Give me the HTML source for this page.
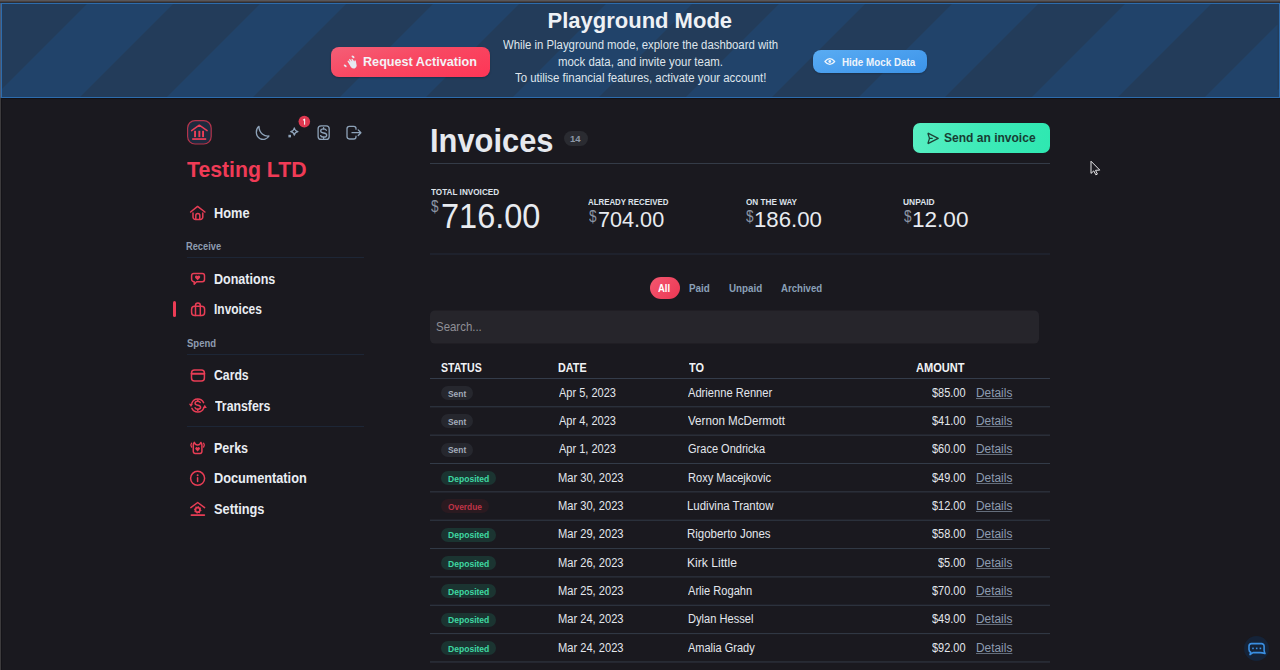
<!DOCTYPE html>
<html><head><meta charset="utf-8"><style>
html,body{margin:0;padding:0;}
body{width:1280px;height:670px;overflow:hidden;background:#1a191f;position:relative;font-family:'Liberation Sans', sans-serif;}
.t{position:absolute;white-space:nowrap;}
.a{position:absolute;}
</style></head><body>
<div class="a" style="left:0;top:0;width:1280px;height:1px;background:#56565b"></div>
<div class="a" style="left:0;top:1px;width:1280px;height:1px;background:#4a403e"></div>
<div class="a" style="left:0;top:2px;width:1280px;height:1px;background:#2a2f38"></div>
<div class="a" style="left:0;top:3px;width:1px;height:95px;background:#4b5870"></div>
<div class="a" style="left:1px;top:3px;width:1277px;height:93px;border:1px solid #2d6cad;background:repeating-linear-gradient(135deg,#233c5a 0px,#233c5a 61.1px,#21436a 61.1px,#21436a 122.3px);background-position:-1.5px 0"></div>
<div class="a" style="left:0;top:98px;width:1280px;height:1px;background:#121116"></div>
<div class="a" style="left:0;top:98px;width:1px;height:572px;background:#3d3b3d"></div>
<div class="a" style="left:1px;top:98px;width:1px;height:572px;background:#141318"></div>
<!-- Request Activation button -->
<div class="a" style="left:331px;top:47px;width:159px;height:30px;border-radius:8px;background:linear-gradient(165deg,#f45f77 0%,#f84862 45%,#fe3556 100%);box-shadow:0 1px 2px rgba(0,0,0,.25)"></div>
<!-- Hide mock data button -->
<div class="a" style="left:813px;top:50px;width:114px;height:23px;border-radius:8px;background:linear-gradient(165deg,#5aacf2 0%,#4a9fee 50%,#3b93e8 100%);box-shadow:0 1px 2px rgba(0,0,0,.2)"></div>
<!-- sidebar dividers -->
<div class="a" style="left:187px;top:257px;width:177px;height:1px;background:#1d2636"></div>
<div class="a" style="left:187px;top:354px;width:177px;height:1px;background:#1d2636"></div>
<div class="a" style="left:187px;top:426px;width:177px;height:1px;background:#1d2636"></div>
<!-- active bar -->
<div class="a" style="left:173px;top:301px;width:3px;height:16px;border-radius:2px;background:#ec3c55"></div>
<!-- main -->
<div class="a" style="left:564px;top:131px;width:24px;height:15px;border-radius:8px;background:#2a2b31"></div>
<div class="a" style="left:913px;top:123px;width:137px;height:30px;border-radius:7px;background:linear-gradient(100deg,#58efc2 0%,#3eeab8 50%,#2ee8b1 100%)"></div>
<div class="a" style="left:430px;top:163px;width:620px;height:1px;background:#343b47"></div>
<svg class="a" style="left:0;top:0" width="1280" height="670"><rect x="430" y="253.5" width="620" height="1" fill="#222b3a"/></svg>
<div class="a" style="left:650px;top:277px;width:30px;height:22px;border-radius:11px;background:linear-gradient(135deg,#f35770,#ec3753)"></div>
<svg class="a" style="left:0;top:0" width="1280" height="670"><rect x="430" y="310.4" width="609" height="33.2" rx="5" fill="#26252b"/></svg>
<div class="a" style="left:430px;top:378px;width:620px;height:1px;background:#343c4a"></div>
<div class="a" style="left:1244px;top:636px;width:25px;height:25px;border-radius:50%;background:#152338"></div>
<svg class="a" style="left:0;top:0" width="1280" height="670" viewBox="0 0 1280 670">
 <g fill="none" stroke-linecap="round" stroke-linejoin="round">
  <!-- logo -->
  <rect x="187.6" y="120.6" width="23.6" height="23.4" rx="7.5" fill="#1e2a3e" stroke="#b3344b" stroke-width="1.2"/>
  <polyline points="191.6,130.6 199.3,125.2 207.1,130.6" stroke="#ec3f57" stroke-width="1.5"/>
  <g fill="#ec3f57" stroke="none">
   <rect x="194.1" y="130.8" width="1.9" height="6.3"/>
   <rect x="198.4" y="130.8" width="1.9" height="6.3"/>
   <rect x="202.1" y="130.8" width="1.9" height="6.3"/>
   <rect x="192.2" y="138.2" width="14" height="1.7"/>
  </g>
  <!-- header icons -->
  <g stroke="#8ea3b9" stroke-width="1.3">
   <path d="M259,126.3 C255.2,129.3 255.4,136 260,138.6 C263.3,140.3 267.2,139.2 269,136 C264.5,136.6 258.8,133 259,126.3 Z"/>
   <path d="M294.3,128 Q294.8,131.1 297.9,131.6 Q294.8,132.1 294.3,135.2 Q293.8,132.1 290.7,131.6 Q293.8,131.1 294.3,128 Z"/>
   <rect x="318.1" y="125.8" width="11.1" height="13.6" rx="3"/>
   <path d="M326.3,130.3 C325.9,129.3 325,128.9 323.6,128.9 C321.7,128.9 320.7,129.8 320.7,131 C320.7,132.4 322,132.8 323.6,133 C325.4,133.2 326.7,133.8 326.7,135.2 C326.7,136.5 325.5,137.1 323.6,137.1 C322.1,137.1 321.1,136.6 320.6,135.6"/>
   <path d="M323.6,127.6 V128.9 M323.6,137.1 V138.4"/>
   <path d="M356,129.2 V128.6 A2.2,2.2 0 0 0 353.8,126.4 H349.4 A2.4,2.4 0 0 0 347,128.8 V136.6 A2.4,2.4 0 0 0 349.4,139 H353.8 A2.2,2.2 0 0 0 356,136.8 V136.2"/>
   <path d="M352,132.7 H360.8 M358.2,129.9 L360.9,132.7 L358.2,135.5"/>
  </g>
  <rect x="288.4" y="134.8" width="2.6" height="2.6" fill="#8ea3b9"/>
  <circle cx="304.3" cy="121.6" r="5.8" fill="#df3850"/>
  <path d="M303.4,119.9 L304.6,119.2 V124.3" stroke="#f4f4f4" stroke-width="1.1"/>
  <!-- nav icons -->
  <g stroke="#e83d55" stroke-width="1.5">
   <polyline points="190.6,212 197.6,206.4 204.9,212"/>
   <path d="M193,212.9 V216.9 A2.6,2.6 0 0 0 195.6,219.5 H200.2 A2.6,2.6 0 0 0 202.8,216.9 V212.9"/>
   <path d="M195.8,219.3 V215.6 A2,2 0 0 1 199.8,215.6 V219.3"/>
   <path d="M193.8,273.6 H202.3 A2.2,2.2 0 0 1 204.5,275.8 V279.6 A2.2,2.2 0 0 1 202.3,281.8 H196.6 L194.2,284.2 V281.7 A2.4,2.4 0 0 1 191.6,279.3 V275.8 A2.2,2.2 0 0 1 193.8,273.6 Z"/>
   <rect x="191.6" y="306.3" width="13" height="9.2" rx="3"/>
   <path d="M195.5,315.4 V305.4 A2.4,2.4 0 0 1 200.3,305.4 V315.4"/>
   <rect x="191.5" y="370" width="12.9" height="11" rx="3"/>
   <path d="M191.6,373.7 H204.3" stroke-width="2"/>
   <path d="M191.8,403.2 A6.5,6.5 0 0 1 203.6,402.6"/>
   <path d="M203.8,408 A6.5,6.5 0 0 1 191.9,408.4"/>
   <path d="M200.2,402.5 C199.8,401.6 199,401.3 197.8,401.3 C196,401.3 195.1,402.2 195.1,403.3 C195.1,404.6 196.3,405 197.8,405.2 C199.5,405.4 200.6,406 200.6,407.3 C200.6,408.6 199.5,409.2 197.8,409.2 C196.5,409.2 195.5,408.7 195.1,407.8"/>
   <path d="M197.8,400 V401.3 M197.8,409.2 V410.5"/>
   <path d="M194.4,442.4 Q195.2,444.9 197.6,444.9 Q200,444.9 200.8,442.4 Q201.9,443.4 201.9,445 V451.6 A1.8,1.8 0 0 1 200.1,453.4 H195.1 A1.8,1.8 0 0 1 193.3,451.6 V445 Q193.3,443.4 194.4,442.4 Z"/>
   <path d="M191.6,443.2 Q190.1,445.1 191.6,447 M203.6,443.2 Q205.1,445.1 203.6,447" stroke-width="1.3"/>
   <circle cx="197.6" cy="478.3" r="7"/>
   <path d="M197.6,477.8 V481.6"/>
   <polyline points="190.8,507.6 197.7,502.5 204.6,507.6"/>
   <path d="M191.4,515.1 H204.3" stroke-width="1.8"/>
  </g>
  <g fill="#e83d55">
   <path d="M197.6,280.2 L195.3,277.9 A1.3,1.3 0 0 1 197.6,276.1 A1.3,1.3 0 0 1 199.9,277.9 Z"/>
   <path d="M188.9,403.8 H193 L191,407 Z"/>
   <path d="M202.7,407.9 H206.8 L204.8,404.8 Z"/>
   <path d="M197.6,451.4 L195.5,449.3 A1.15,1.15 0 0 1 197.6,447.7 A1.15,1.15 0 0 1 199.7,449.3 Z"/>
   <circle cx="197.6" cy="475.2" r="1"/>
  </g>
  <path d="M201.62,510.68 L200.28,511.62 L199.92,513.23 L198.30,512.94 L196.92,513.82 L195.98,512.48 L194.37,512.12 L194.66,510.50 L193.78,509.12 L195.12,508.18 L195.48,506.57 L197.10,506.86 L198.48,505.98 L199.42,507.32 L201.03,507.68 L200.74,509.30 Z M199.10,509.90 A1.4,1.4 0 1 0 196.30,509.90 A1.4,1.4 0 1 0 199.10,509.90 Z" fill="#e83d55" fill-rule="evenodd" stroke="none"/>
  <!-- banner icons -->
  <g fill="#e6e9f0" stroke="none">
   <path d="M347.6,61.6 Q347.2,60.6 348.2,60.4 L350.4,62.2 L349,59.8 Q349,58.8 350,59 L352.2,61.4 L351.4,59.4 Q351.6,58.6 352.5,59 L354.4,61.6 L354.5,60.6 Q355.2,60 355.8,60.8 L356.7,65.8 Q356.6,67.6 354.6,68.4 Q352.6,68.8 351,67.2 Z"/>
   <ellipse cx="353" cy="56.8" rx="1.7" ry="1" transform="rotate(40 353 56.8)"/>
   <ellipse cx="345.2" cy="65.8" rx="1.7" ry="1" transform="rotate(40 345.2 65.8)"/>
  </g>
  <g stroke="#eef4fb" stroke-width="1.2" fill="none">
   <path d="M824.9,61.5 Q829.8,55.7 834.7,61.5 Q829.8,67.3 824.9,61.5 Z"/>
  </g>
  <circle cx="829.8" cy="61.5" r="1.4" fill="#eef4fb"/>
  <!-- send icon -->
  <g transform="translate(925.6,130.7) scale(0.6,0.64)" stroke="#1d4236" stroke-width="2.1" fill="none" stroke-linejoin="round" stroke-linecap="round">
   <path d="M4.698 4.034l16.302 7.966l-16.302 7.966a.503 .503 0 0 1 -.546 -.124a.555 .555 0 0 1 -.12 -.568l2.468 -7.274l-2.468 -7.274a.555 .555 0 0 1 .12 -.568a.503 .503 0 0 1 .546 -.124z"/>
   <path d="M6.5 12h4.5"/>
  </g>
  <!-- dollar signs -->
  <!-- chat widget -->
  <g stroke="#3a8fe2" stroke-width="1.6" fill="none">
   <path d="M1251.5,643.6 H1261.5 A2.6,2.6 0 0 1 1264.1,646.2 V650.6 Q1264.6,652.5 1265,653.6 Q1262,652.6 1260.5,652.6 H1253 L1250,654.6 L1250.8,652.3 Q1249,651.5 1249,649.6 V646.2 A2.6,2.6 0 0 1 1251.5,643.6 Z"/>
  </g>
  <g fill="#3a8fe2"><rect x="1252.2" y="647.6" width="1.6" height="1.6"/><rect x="1255.9" y="647.6" width="1.6" height="1.6"/><rect x="1259.6" y="647.6" width="1.6" height="1.6"/></g>
  <!-- cursor -->
  <path d="M1091,161.6 V173.4 L1093.8,170.9 L1095.8,174.8 L1097.4,174.1 L1095.5,170.3 L1099.4,170.1 Z" fill="#1b1a20" stroke="#e8e8ea" stroke-width="1" stroke-linejoin="miter"/>
 </g>
</svg>

<div style="position:absolute;left:441px;top:386.00px;width:32px;height:14px;border-radius:7px;background:#26272e"></div><div style="position:absolute;left:441px;top:414.35px;width:32px;height:14px;border-radius:7px;background:#26272e"></div><div style="position:absolute;left:441px;top:442.70px;width:32px;height:14px;border-radius:7px;background:#26272e"></div><div style="position:absolute;left:441px;top:471.05px;width:55px;height:14px;border-radius:7px;background:#1b3431"></div><div style="position:absolute;left:441px;top:499.40px;width:47.5px;height:14px;border-radius:7px;background:#2a1a20"></div><div style="position:absolute;left:441px;top:527.75px;width:55px;height:14px;border-radius:7px;background:#1b3431"></div><div style="position:absolute;left:441px;top:556.10px;width:55px;height:14px;border-radius:7px;background:#1b3431"></div><div style="position:absolute;left:441px;top:584.45px;width:55px;height:14px;border-radius:7px;background:#1b3431"></div><div style="position:absolute;left:441px;top:612.80px;width:55px;height:14px;border-radius:7px;background:#1b3431"></div><div style="position:absolute;left:441px;top:641.15px;width:55px;height:14px;border-radius:7px;background:#1b3431"></div><div style="position:absolute;left:441px;top:669.50px;width:55px;height:14px;border-radius:7px;background:#1b3431"></div>
<svg class="a" style="left:0;top:0" width="1280" height="670"><rect x="430" y="406.30" width="620" height="1" fill="#333b48"/><rect x="430" y="434.65" width="620" height="1" fill="#333b48"/><rect x="430" y="463.00" width="620" height="1" fill="#333b48"/><rect x="430" y="491.35" width="620" height="1" fill="#333b48"/><rect x="430" y="519.70" width="620" height="1" fill="#333b48"/><rect x="430" y="548.05" width="620" height="1" fill="#333b48"/><rect x="430" y="576.40" width="620" height="1" fill="#333b48"/><rect x="430" y="604.75" width="620" height="1" fill="#333b48"/><rect x="430" y="633.10" width="620" height="1" fill="#333b48"/><rect x="430" y="661.45" width="620" height="1" fill="#333b48"/></svg>
<div class="t" style="left:547.50px;top:9.68px;font-size:22px;line-height:22px;font-weight:700;color:#eef1f5;">Playground Mode</div><div class="t" style="left:503.35px;top:39.24px;font-size:12px;line-height:12px;font-weight:400;color:#dfe5ec;transform:scaleX(0.9459);transform-origin:0 0;">While in Playground mode, explore the dashboard with</div><div class="t" style="left:558.05px;top:55.54px;font-size:12px;line-height:12px;font-weight:400;color:#dfe5ec;transform:scaleX(0.9509);transform-origin:0 0;">mock data, and invite your team.</div><div class="t" style="left:515.35px;top:71.84px;font-size:12px;line-height:12px;font-weight:400;color:#dfe5ec;transform:scaleX(0.9517);transform-origin:0 0;">To utilise financial features, activate your account!</div><div class="t" style="left:363.04px;top:55.23px;font-size:13.2px;line-height:13.2px;font-weight:700;color:#f3f3f7;transform:scaleX(0.9573);transform-origin:0 0;">Request Activation</div><div class="t" style="left:841.86px;top:57.41px;font-size:10.5px;line-height:10.5px;font-weight:700;color:#eef4fb;transform:scaleX(0.9377);transform-origin:0 0;">Hide Mock Data</div><div class="t" style="left:187.00px;top:158.72px;font-size:21.6px;line-height:21.6px;font-weight:700;color:#f03b56;transform:scaleX(0.9835);transform-origin:0 0;">Testing LTD</div><div class="t" style="left:214.09px;top:206.45px;font-size:14px;line-height:14px;font-weight:700;color:#e9edf3;transform:scaleX(0.9135);transform-origin:0 0;">Home</div><div class="t" style="left:214.10px;top:271.75px;font-size:14px;line-height:14px;font-weight:700;color:#e9edf3;transform:scaleX(0.8955);transform-origin:0 0;">Donations</div><div class="t" style="left:214.15px;top:302.15px;font-size:14px;line-height:14px;font-weight:700;color:#e9edf3;transform:scaleX(0.8545);transform-origin:0 0;">Invoices</div><div class="t" style="left:214.13px;top:368.35px;font-size:14px;line-height:14px;font-weight:700;color:#e9edf3;transform:scaleX(0.8737);transform-origin:0 0;">Cards</div><div class="t" style="left:215.00px;top:398.95px;font-size:14px;line-height:14px;font-weight:700;color:#e9edf3;transform:scaleX(0.8794);transform-origin:0 0;">Transfers</div><div class="t" style="left:214.11px;top:440.65px;font-size:14px;line-height:14px;font-weight:700;color:#e9edf3;transform:scaleX(0.8919);transform-origin:0 0;">Perks</div><div class="t" style="left:214.09px;top:471.15px;font-size:14px;line-height:14px;font-weight:700;color:#e9edf3;transform:scaleX(0.9100);transform-origin:0 0;">Documentation</div><div class="t" style="left:214.09px;top:501.95px;font-size:14px;line-height:14px;font-weight:700;color:#e9edf3;transform:scaleX(0.9130);transform-origin:0 0;">Settings</div><div class="t" style="left:186.16px;top:241.39px;font-size:11px;line-height:11px;font-weight:700;color:#8e9cb0;transform:scaleX(0.8425);transform-origin:0 0;">Receive</div><div class="t" style="left:187.00px;top:337.69px;font-size:11px;line-height:11px;font-weight:700;color:#8e9cb0;transform:scaleX(0.8636);transform-origin:0 0;">Spend</div><div class="t" style="left:430.18px;top:122.82px;font-size:34px;line-height:34px;font-weight:700;color:#e6e9ef;transform:scaleX(0.9075);transform-origin:0 0;">Invoices</div><div class="t" style="left:570.00px;top:134.36px;font-size:9.5px;line-height:9.5px;font-weight:700;color:#8d97a6;">14</div><div class="t" style="left:943.87px;top:130.99px;font-size:13.6px;line-height:13.6px;font-weight:700;color:#173d33;transform:scaleX(0.8848);transform-origin:0 0;">Send an invoice</div><div class="t" style="left:430.60px;top:187.36px;font-size:9.5px;line-height:9.5px;font-weight:700;color:#dde2ea;transform:scaleX(0.8608);transform-origin:0 0;">TOTAL INVOICED</div><div class="t" style="left:588.20px;top:197.06px;font-size:9.5px;line-height:9.5px;font-weight:700;color:#dde2ea;transform:scaleX(0.8289);transform-origin:0 0;">ALREADY RECEIVED</div><div class="t" style="left:745.70px;top:197.06px;font-size:9.5px;line-height:9.5px;font-weight:700;color:#dde2ea;transform:scaleX(0.8610);transform-origin:0 0;">ON THE WAY</div><div class="t" style="left:903.00px;top:197.06px;font-size:9.5px;line-height:9.5px;font-weight:700;color:#dde2ea;transform:scaleX(0.8857);transform-origin:0 0;">UNPAID</div><div class="t" style="left:441.34px;top:198.17px;font-size:35px;line-height:35px;font-weight:400;color:#e8ebf0;transform:scaleX(0.9288);transform-origin:0 0;">716.00</div><div class="t" style="left:598.42px;top:208.63px;font-size:22px;line-height:22px;font-weight:400;color:#e8ebf0;transform:scaleX(0.9833);transform-origin:0 0;">704.00</div><div class="t" style="left:588.70px;top:208.33px;font-size:16.5px;line-height:16.5px;font-weight:400;color:#8b95a4;transform:scaleX(0.8222);transform-origin:0 0;">$</div><div class="t" style="left:754.18px;top:208.63px;font-size:22px;line-height:22px;font-weight:400;color:#e8ebf0;transform:scaleX(1.0092);transform-origin:0 0;">186.00</div><div class="t" style="left:746.20px;top:208.33px;font-size:16.5px;line-height:16.5px;font-weight:400;color:#8b95a4;transform:scaleX(0.8222);transform-origin:0 0;">$</div><div class="t" style="left:911.65px;top:208.63px;font-size:22px;line-height:22px;font-weight:400;color:#e8ebf0;transform:scaleX(1.0250);transform-origin:0 0;">12.00</div><div class="t" style="left:903.50px;top:208.33px;font-size:16.5px;line-height:16.5px;font-weight:400;color:#8b95a4;transform:scaleX(0.8222);transform-origin:0 0;">$</div><div class="t" style="left:431.00px;top:198.33px;font-size:16.5px;line-height:16.5px;font-weight:400;color:#8b95a4;transform:scaleX(0.8222);transform-origin:0 0;">$</div><div class="t" style="left:658.45px;top:282.59px;font-size:11px;line-height:11px;font-weight:700;color:#ffffff;transform:scaleX(0.8643);transform-origin:0 0;">All</div><div class="t" style="left:689.40px;top:282.59px;font-size:11px;line-height:11px;font-weight:700;color:#8aa0b8;transform:scaleX(0.8955);transform-origin:0 0;">Paid</div><div class="t" style="left:728.61px;top:282.59px;font-size:11px;line-height:11px;font-weight:700;color:#8aa0b8;transform:scaleX(0.8917);transform-origin:0 0;">Unpaid</div><div class="t" style="left:781.40px;top:282.59px;font-size:11px;line-height:11px;font-weight:700;color:#8aa0b8;transform:scaleX(0.8739);transform-origin:0 0;">Archived</div><div class="t" style="left:435.52px;top:319.90px;font-size:13px;line-height:13px;font-weight:400;color:#8f8f96;transform:scaleX(0.8800);transform-origin:0 0;">Search...</div><div class="t" style="left:440.62px;top:362.04px;font-size:12px;line-height:12px;font-weight:700;color:#f1f3f6;transform:scaleX(0.8822);transform-origin:0 0;">STATUS</div><div class="t" style="left:557.90px;top:362.04px;font-size:12px;line-height:12px;font-weight:700;color:#f1f3f6;transform:scaleX(0.9000);transform-origin:0 0;">DATE</div><div class="t" style="left:688.70px;top:362.04px;font-size:12px;line-height:12px;font-weight:700;color:#f1f3f6;transform:scaleX(0.9125);transform-origin:0 0;">TO</div><div class="t" style="left:916.10px;top:362.04px;font-size:12px;line-height:12px;font-weight:700;color:#f1f3f6;transform:scaleX(0.9208);transform-origin:0 0;">AMOUNT</div><div class="t" style="left:447.90px;top:389.52px;font-size:8.6px;line-height:8.6px;font-weight:700;color:#a3adbb;transform:scaleX(0.9789);transform-origin:0 0;">Sent</div><div class="t" style="left:558.90px;top:386.59px;font-size:12.3px;line-height:12.3px;font-weight:400;color:#e3e7ed;transform:scaleX(0.8952);transform-origin:0 0;">Apr 5, 2023</div><div class="t" style="left:688.40px;top:386.59px;font-size:12.3px;line-height:12.3px;font-weight:400;color:#e3e7ed;transform:scaleX(0.9054);transform-origin:0 0;">Adrienne Renner</div><div class="t" style="left:932.47px;top:386.59px;font-size:12.3px;line-height:12.3px;font-weight:400;color:#e3e7ed;transform:scaleX(0.8900);transform-origin:0 0;">$85.00</div><div class="t" style="left:975.73px;top:386.59px;font-size:12.3px;line-height:12.3px;font-weight:400;color:#8d9bb0;transform:scaleX(0.9667);transform-origin:0 0;text-decoration:underline;text-decoration-color:#646d7b;text-underline-offset:1px;">Details</div><div class="t" style="left:447.90px;top:417.87px;font-size:8.6px;line-height:8.6px;font-weight:700;color:#a3adbb;transform:scaleX(0.9789);transform-origin:0 0;">Sent</div><div class="t" style="left:558.90px;top:414.94px;font-size:12.3px;line-height:12.3px;font-weight:400;color:#e3e7ed;transform:scaleX(0.8952);transform-origin:0 0;">Apr 4, 2023</div><div class="t" style="left:688.40px;top:414.94px;font-size:12.3px;line-height:12.3px;font-weight:400;color:#e3e7ed;transform:scaleX(0.9461);transform-origin:0 0;">Vernon McDermott</div><div class="t" style="left:932.47px;top:414.94px;font-size:12.3px;line-height:12.3px;font-weight:400;color:#e3e7ed;transform:scaleX(0.8900);transform-origin:0 0;">$41.00</div><div class="t" style="left:975.73px;top:414.94px;font-size:12.3px;line-height:12.3px;font-weight:400;color:#8d9bb0;transform:scaleX(0.9667);transform-origin:0 0;text-decoration:underline;text-decoration-color:#646d7b;text-underline-offset:1px;">Details</div><div class="t" style="left:447.90px;top:446.22px;font-size:8.6px;line-height:8.6px;font-weight:700;color:#a3adbb;transform:scaleX(0.9789);transform-origin:0 0;">Sent</div><div class="t" style="left:558.90px;top:443.29px;font-size:12.3px;line-height:12.3px;font-weight:400;color:#e3e7ed;transform:scaleX(0.8952);transform-origin:0 0;">Apr 1, 2023</div><div class="t" style="left:687.50px;top:443.29px;font-size:12.3px;line-height:12.3px;font-weight:400;color:#e3e7ed;transform:scaleX(0.8965);transform-origin:0 0;">Grace Ondricka</div><div class="t" style="left:932.47px;top:443.29px;font-size:12.3px;line-height:12.3px;font-weight:400;color:#e3e7ed;transform:scaleX(0.8900);transform-origin:0 0;">$60.00</div><div class="t" style="left:975.73px;top:443.29px;font-size:12.3px;line-height:12.3px;font-weight:400;color:#8d9bb0;transform:scaleX(0.9667);transform-origin:0 0;text-decoration:underline;text-decoration-color:#646d7b;text-underline-offset:1px;">Details</div><div class="t" style="left:448.30px;top:474.57px;font-size:8.6px;line-height:8.6px;font-weight:700;color:#3fd8a2;transform:scaleX(0.9951);transform-origin:0 0;">Deposited</div><div class="t" style="left:558.00px;top:471.64px;font-size:12.3px;line-height:12.3px;font-weight:400;color:#e3e7ed;transform:scaleX(0.9042);transform-origin:0 0;">Mar 30, 2023</div><div class="t" style="left:687.50px;top:471.64px;font-size:12.3px;line-height:12.3px;font-weight:400;color:#e3e7ed;transform:scaleX(0.9000);transform-origin:0 0;">Roxy Macejkovic</div><div class="t" style="left:932.47px;top:471.64px;font-size:12.3px;line-height:12.3px;font-weight:400;color:#e3e7ed;transform:scaleX(0.8900);transform-origin:0 0;">$49.00</div><div class="t" style="left:975.73px;top:471.64px;font-size:12.3px;line-height:12.3px;font-weight:400;color:#8d9bb0;transform:scaleX(0.9667);transform-origin:0 0;text-decoration:underline;text-decoration-color:#646d7b;text-underline-offset:1px;">Details</div><div class="t" style="left:448.25px;top:502.92px;font-size:8.6px;line-height:8.6px;font-weight:700;color:#bf3447;transform:scaleX(0.9714);transform-origin:0 0;">Overdue</div><div class="t" style="left:558.00px;top:499.99px;font-size:12.3px;line-height:12.3px;font-weight:400;color:#e3e7ed;transform:scaleX(0.9042);transform-origin:0 0;">Mar 30, 2023</div><div class="t" style="left:687.47px;top:499.99px;font-size:12.3px;line-height:12.3px;font-weight:400;color:#e3e7ed;transform:scaleX(0.9304);transform-origin:0 0;">Ludivina Trantow</div><div class="t" style="left:932.47px;top:499.99px;font-size:12.3px;line-height:12.3px;font-weight:400;color:#e3e7ed;transform:scaleX(0.8900);transform-origin:0 0;">$12.00</div><div class="t" style="left:975.73px;top:499.99px;font-size:12.3px;line-height:12.3px;font-weight:400;color:#8d9bb0;transform:scaleX(0.9667);transform-origin:0 0;text-decoration:underline;text-decoration-color:#646d7b;text-underline-offset:1px;">Details</div><div class="t" style="left:448.30px;top:531.27px;font-size:8.6px;line-height:8.6px;font-weight:700;color:#3fd8a2;transform:scaleX(0.9951);transform-origin:0 0;">Deposited</div><div class="t" style="left:558.00px;top:528.34px;font-size:12.3px;line-height:12.3px;font-weight:400;color:#e3e7ed;transform:scaleX(0.9042);transform-origin:0 0;">Mar 29, 2023</div><div class="t" style="left:687.47px;top:528.34px;font-size:12.3px;line-height:12.3px;font-weight:400;color:#e3e7ed;transform:scaleX(0.9330);transform-origin:0 0;">Rigoberto Jones</div><div class="t" style="left:932.47px;top:528.34px;font-size:12.3px;line-height:12.3px;font-weight:400;color:#e3e7ed;transform:scaleX(0.8900);transform-origin:0 0;">$58.00</div><div class="t" style="left:975.73px;top:528.34px;font-size:12.3px;line-height:12.3px;font-weight:400;color:#8d9bb0;transform:scaleX(0.9667);transform-origin:0 0;text-decoration:underline;text-decoration-color:#646d7b;text-underline-offset:1px;">Details</div><div class="t" style="left:448.30px;top:559.62px;font-size:8.6px;line-height:8.6px;font-weight:700;color:#3fd8a2;transform:scaleX(0.9951);transform-origin:0 0;">Deposited</div><div class="t" style="left:558.00px;top:556.69px;font-size:12.3px;line-height:12.3px;font-weight:400;color:#e3e7ed;transform:scaleX(0.9042);transform-origin:0 0;">Mar 26, 2023</div><div class="t" style="left:687.41px;top:556.69px;font-size:12.3px;line-height:12.3px;font-weight:400;color:#e3e7ed;transform:scaleX(0.9878);transform-origin:0 0;">Kirk Little</div><div class="t" style="left:937.81px;top:556.69px;font-size:12.3px;line-height:12.3px;font-weight:400;color:#e3e7ed;transform:scaleX(0.8900);transform-origin:0 0;">$5.00</div><div class="t" style="left:975.73px;top:556.69px;font-size:12.3px;line-height:12.3px;font-weight:400;color:#8d9bb0;transform:scaleX(0.9667);transform-origin:0 0;text-decoration:underline;text-decoration-color:#646d7b;text-underline-offset:1px;">Details</div><div class="t" style="left:448.30px;top:587.97px;font-size:8.6px;line-height:8.6px;font-weight:700;color:#3fd8a2;transform:scaleX(0.9951);transform-origin:0 0;">Deposited</div><div class="t" style="left:558.00px;top:585.04px;font-size:12.3px;line-height:12.3px;font-weight:400;color:#e3e7ed;transform:scaleX(0.9042);transform-origin:0 0;">Mar 25, 2023</div><div class="t" style="left:688.40px;top:585.04px;font-size:12.3px;line-height:12.3px;font-weight:400;color:#e3e7ed;transform:scaleX(0.9028);transform-origin:0 0;">Arlie Rogahn</div><div class="t" style="left:932.47px;top:585.04px;font-size:12.3px;line-height:12.3px;font-weight:400;color:#e3e7ed;transform:scaleX(0.8900);transform-origin:0 0;">$70.00</div><div class="t" style="left:975.73px;top:585.04px;font-size:12.3px;line-height:12.3px;font-weight:400;color:#8d9bb0;transform:scaleX(0.9667);transform-origin:0 0;text-decoration:underline;text-decoration-color:#646d7b;text-underline-offset:1px;">Details</div><div class="t" style="left:448.30px;top:616.32px;font-size:8.6px;line-height:8.6px;font-weight:700;color:#3fd8a2;transform:scaleX(0.9951);transform-origin:0 0;">Deposited</div><div class="t" style="left:558.00px;top:613.39px;font-size:12.3px;line-height:12.3px;font-weight:400;color:#e3e7ed;transform:scaleX(0.9042);transform-origin:0 0;">Mar 24, 2023</div><div class="t" style="left:687.50px;top:613.39px;font-size:12.3px;line-height:12.3px;font-weight:400;color:#e3e7ed;transform:scaleX(0.9028);transform-origin:0 0;">Dylan Hessel</div><div class="t" style="left:932.47px;top:613.39px;font-size:12.3px;line-height:12.3px;font-weight:400;color:#e3e7ed;transform:scaleX(0.8900);transform-origin:0 0;">$49.00</div><div class="t" style="left:975.73px;top:613.39px;font-size:12.3px;line-height:12.3px;font-weight:400;color:#8d9bb0;transform:scaleX(0.9667);transform-origin:0 0;text-decoration:underline;text-decoration-color:#646d7b;text-underline-offset:1px;">Details</div><div class="t" style="left:448.30px;top:644.67px;font-size:8.6px;line-height:8.6px;font-weight:700;color:#3fd8a2;transform:scaleX(0.9951);transform-origin:0 0;">Deposited</div><div class="t" style="left:558.00px;top:641.74px;font-size:12.3px;line-height:12.3px;font-weight:400;color:#e3e7ed;transform:scaleX(0.9042);transform-origin:0 0;">Mar 24, 2023</div><div class="t" style="left:688.40px;top:641.74px;font-size:12.3px;line-height:12.3px;font-weight:400;color:#e3e7ed;transform:scaleX(0.8946);transform-origin:0 0;">Amalia Grady</div><div class="t" style="left:932.47px;top:641.74px;font-size:12.3px;line-height:12.3px;font-weight:400;color:#e3e7ed;transform:scaleX(0.8900);transform-origin:0 0;">$92.00</div><div class="t" style="left:975.73px;top:641.74px;font-size:12.3px;line-height:12.3px;font-weight:400;color:#8d9bb0;transform:scaleX(0.9667);transform-origin:0 0;text-decoration:underline;text-decoration-color:#646d7b;text-underline-offset:1px;">Details</div><div class="t" style="left:448.30px;top:673.02px;font-size:8.6px;line-height:8.6px;font-weight:700;color:#3fd8a2;transform:scaleX(0.9951);transform-origin:0 0;">Deposited</div><div class="t" style="left:558.00px;top:670.09px;font-size:12.3px;line-height:12.3px;font-weight:400;color:#e3e7ed;transform:scaleX(0.9042);transform-origin:0 0;">Mar 23, 2023</div><div class="t" style="left:687.38px;top:670.09px;font-size:12.3px;line-height:12.3px;font-weight:400;color:#e3e7ed;transform:scaleX(1.0229);transform-origin:0 0;">Lorem Ipsum</div><div class="t" style="left:932.47px;top:670.09px;font-size:12.3px;line-height:12.3px;font-weight:400;color:#e3e7ed;transform:scaleX(0.8900);transform-origin:0 0;">$31.00</div><div class="t" style="left:975.73px;top:670.09px;font-size:12.3px;line-height:12.3px;font-weight:400;color:#8d9bb0;transform:scaleX(0.9667);transform-origin:0 0;text-decoration:underline;text-decoration-color:#646d7b;text-underline-offset:1px;">Details</div>
</body></html>
